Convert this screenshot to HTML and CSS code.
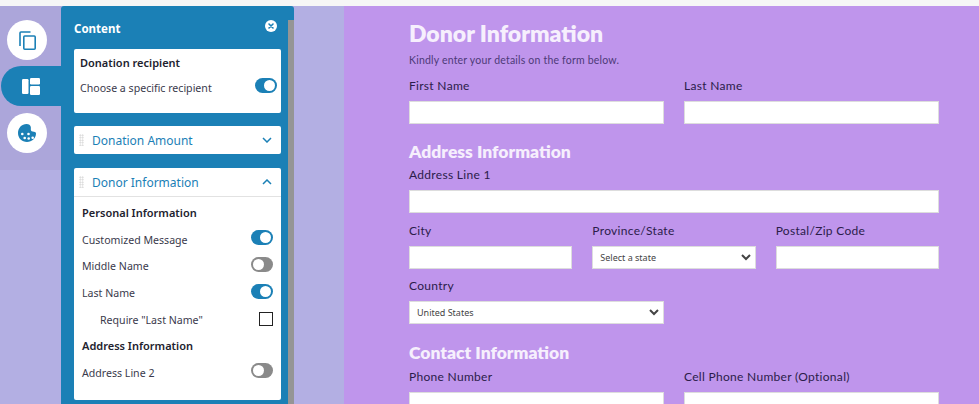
FILE: index.html
```html
<!DOCTYPE html>
<html lang="en">
<head>
<meta charset="UTF-8">
<meta name="viewport" content="width=device-width, initial-scale=1.0">
<title>Donation form editor</title>
<link rel="stylesheet" href="styles.css">
</head>
<body>

<div class="topbar"></div>

<div class="workspace">

    <nav class="rail">
        <div class="rail-tabs">
            <button class="rail-btn" aria-label="Pages">
                <svg width="17" height="19" viewBox="0 0 17 19" fill="none" stroke="#1b80b6" stroke-width="1.600">
                    <path d="M1 15V2a1 1 0 0 1 1-1h9.500"/>
                    <rect x="4.800" y="5" width="11.400" height="13.200" rx="1"/>
                </svg>
            </button>
            <button class="rail-btn rail-btn-active" aria-label="Content">
                <svg width="18" height="17" viewBox="0 0 18 17" fill="#fff">
                    <rect x="0" y="1" width="6.500" height="15" rx="1.200"/>
                    <rect x="8" y="0" width="10" height="6.500" rx="1.200"/>
                    <rect x="8" y="8" width="10" height="9" rx="1.200"/>
                </svg>
            </button>
            <button class="rail-btn rail-btn-last" aria-label="Appearance">
                <svg width="18" height="18" viewBox="0 0 18 18">
                    <path fill="#1b80b6" d="M8.500 0C3.800 0 0 3.900 0 9c0 5.200 4 9 9 9s9-3.900 9-8.500c0-1.200-.9-1.700-2-1.800-2-.1-3.200-.9-3.200-2.300 0-.9.200-1.500 0-2.500C12.400 1.300 10.900 0 8.500 0z"/>
                    <g fill="#fff">
                        <circle cx="4.300" cy="10" r="1.300"/>
                        <circle cx="10.500" cy="10" r="1.300"/>
                        <circle cx="6.700" cy="14" r="1.300"/>
                        <circle cx="10.700" cy="14.500" r="1.300"/>
                        <circle cx="14.700" cy="13.800" r="1.300"/>
                    </g>
                </svg>
            </button>
        </div>
    </nav>

    <aside class="panel">
        <div class="panel-head">
            <h2>Content</h2>
            <span class="close-btn">
                <svg width="12" height="12" viewBox="0 0 12 12">
                    <circle cx="6" cy="6" r="6" fill="#fff"/>
                    <path d="M4 4l4 4M8 4l-4 4" stroke="#1b80b6" stroke-width="1.600" stroke-linecap="round"/>
                </svg>
            </span>
        </div>

        <div class="card recipient">
            <h3>Donation recipient</h3>
            <div class="row">
                <span>Choose a specific recipient</span>
                <span class="toggle on"></span>
            </div>
        </div>

        <div class="card accordion">
            <span class="grip"></span>
            <span class="accordion-title">Donation Amount</span>
            <svg class="chevron" width="10" height="6" viewBox="0 0 10 6" fill="none" stroke="#1b80b6" stroke-width="1.500"><path d="M1 1l4 4 4-4"/></svg>
        </div>

        <div class="card donor">
            <div class="accordion accordion-open">
                <span class="grip"></span>
                <span class="accordion-title">Donor Information</span>
                <svg class="chevron" width="10" height="6" viewBox="0 0 10 6" fill="none" stroke="#1b80b6" stroke-width="1.500"><path d="M1 5l4-4 4 4"/></svg>
            </div>
            <div class="donor-body">
                <h3>Personal Information</h3>
                <div class="row"><span>Customized Message</span><span class="toggle on"></span></div>
                <div class="row"><span>Middle Name</span><span class="toggle"></span></div>
                <div class="row"><span>Last Name</span><span class="toggle on"></span></div>
                <div class="row row-sub"><span>Require "Last Name"</span><span class="checkbox"></span></div>
                <h3>Address Information</h3>
                <div class="row"><span>Address Line 2</span><span class="toggle"></span></div>
            </div>
        </div>
    </aside>

    <div class="gutter"></div>

    <main class="form-area">
        <h1>Donor Information</h1>
        <p class="intro">Kindly enter your details on the form below.</p>

        <div class="cols-2">
            <div class="field"><label>First Name</label><input type="text"></div>
            <div class="field"><label>Last Name</label><input type="text"></div>
        </div>

        <h2 class="section">Address Information</h2>
        <div class="field"><label>Address Line 1</label><input type="text"></div>

        <div class="cols-3">
            <div class="field"><label>City</label><input type="text"></div>
            <div class="field">
                <label>Province/State</label>
                <div class="select">
                    <span>Select a state</span>
                    <svg width="10" height="7" viewBox="0 0 10 7" fill="none" stroke="#444" stroke-width="2"><path d="M1 1l4 4 4-4"/></svg>
                </div>
            </div>
            <div class="field"><label>Postal/Zip Code</label><input type="text"></div>
        </div>

        <div class="cols-2">
            <div class="field">
                <label>Country</label>
                <div class="select">
                    <span>United States</span>
                    <svg width="10" height="7" viewBox="0 0 10 7" fill="none" stroke="#444" stroke-width="2"><path d="M1 1l4 4 4-4"/></svg>
                </div>
            </div>
        </div>

        <h2 class="section section-contact">Contact Information</h2>
        <div class="cols-2">
            <div class="field"><label>Phone Number</label><input type="text"></div>
            <div class="field"><label>Cell Phone Number (Optional)</label><input type="text"></div>
        </div>
    </main>

</div>

</body>
</html>
```

FILE: styles.css
```css
html, body {
    height: 100%;
}
body {
    margin: 0;
    height: 404px;
    overflow: hidden;
    background-color: #b3afe3;
    font-family: "Noto Sans", sans-serif;
    color: #2a2a3a;
}
.topbar {
    height: 6px;
    background-color: #f6f6f6;
}
.workspace {
    display: flex;
    height: 398px;
}

/* left icon rail */
.rail {
    width: 61px;
    flex-shrink: 0;
}
.rail-tabs {
    height: 164px;
    padding-top: 14px;
    box-sizing: border-box;
    background-color: #aca6da;
    display: flex;
    flex-direction: column;
    align-items: flex-end;
    gap: 6px;
}
.rail-btn {
    width: 40px;
    height: 40px;
    margin-right: 14px;
    padding: 0;
    border: none;
    border-radius: 50%;
    background-color: #fff;
    display: flex;
    justify-content: center;
    align-items: center;
}
.rail-btn-active {
    width: 60px;
    margin-right: 0;
    border-radius: 20px 0 0 20px;
    background-color: #1b80b6;
}
.rail-btn-last {
    margin-top: 1px;
}

/* content panel */
.panel {
    width: 233px;
    flex-shrink: 0;
    box-sizing: border-box;
    padding: 0 13px;
    background-color: #1b80b6;
    border-radius: 3px 3px 0 0;
    position: relative;
}
.panel::after {
    content: "";
    position: absolute;
    top: 14px;
    right: 0;
    bottom: 0;
    width: 6px;
    background-color: #959595;
}
.panel-head {
    height: 43px;
    display: flex;
    justify-content: space-between;
    align-items: center;
}
.panel-head h2 {
    margin: 1px 0 0;
    font-size: 11.500px;
    font-weight: 700;
    color: #fff;
}
.close-btn {
    display: flex;
    margin: 0 4px 3px 0;
}
.card {
    background-color: #fff;
    width: 207px;
    border-radius: 2px;
}
.card h3 {
    margin: 0;
    font-size: 11px;
    font-weight: 600;
    color: #22222e;
}
.row {
    display: flex;
    justify-content: space-between;
    align-items: center;
    font-size: 10.600px;
    color: #3a3a4c;
}
.recipient {
    height: 64px;
    box-sizing: border-box;
    padding: 5px 4px 0 6px;
    margin-bottom: 13px;
}
.recipient h3 {
    line-height: 17px;
}
.recipient .row {
    margin-top: 9px;
}
.accordion {
    height: 28px;
    display: flex;
    align-items: center;
    padding: 0 9px 0 5px;
    box-sizing: border-box;
}
.card.accordion {
    margin-bottom: 14px;
}
.accordion-open {
    height: 29px;
    border-bottom: 1px solid #e2e2e2;
}
.grip {
    width: 5px;
    height: 12px;
    margin-right: 8px;
    background-image: radial-gradient(#d4d4d4 0.8px, transparent 0.9px);
    background-size: 2.500px 2.500px;
}
.accordion-title {
    flex: 1;
    font-size: 12px;
    color: #1b80b6;
}
.donor {
    height: 232px;
}
.donor-body {
    padding: 3px 8px 0;
}
.donor-body h3 {
    line-height: 26.600px;
}
.donor-body .row {
    height: 26.600px;
}
.row-sub {
    padding-left: 18px;
}
.toggle {
    width: 22px;
    height: 15px;
    border-radius: 8px;
    background-color: #8a8a8a;
    position: relative;
    margin: -2px 0 2px;
}
.toggle::after {
    content: "";
    position: absolute;
    top: 2px;
    left: 2px;
    width: 11px;
    height: 11px;
    border-radius: 50%;
    background-color: #fff;
}
.toggle.on {
    background-color: #1b80b6;
}
.toggle.on::after {
    left: 9px;
}
.checkbox {
    width: 12px;
    height: 12px;
    border: 1px solid #222;
    margin: -1px 0 1px;
}

.gutter {
    width: 50px;
    flex-shrink: 0;
}

/* form preview */
.form-area {
    flex: 1;
    background-color: #bf95ec;
    padding: 12px 40px 0 65px;
    overflow: hidden;
}
.form-area h1 {
    margin: 0;
    font-family: "Lato", sans-serif;
    font-size: 23px;
    line-height: 30px;
    font-weight: 800;
    color: #f6effd;
}
.intro {
    margin: 4px 0 7px;
    font-size: 10.500px;
    line-height: 16px;
    letter-spacing: 0.2px;
    color: #4d3a78;
    font-family: "Lato", sans-serif;
}
.cols-2 {
    display: grid;
    grid-template-columns: repeat(2, 1fr);
    gap: 20px;
}
.cols-3 {
    display: grid;
    grid-template-columns: repeat(3, 1fr);
    gap: 20px;
    margin-top: 7px;
}
.cols-3 + .cols-2 {
    margin-top: 6px;
}
.field {
    margin-top: 2px;
}
.field label {
    display: block;
    font-family: "Lato", sans-serif;
    font-size: 12px;
    line-height: 17px;
    color: #2b1c4a;
    letter-spacing: 0.3px;
    margin-bottom: 7px;
}
.field input,
.select {
    display: block;
    width: 100%;
    height: 23px;
    box-sizing: border-box;
    border: 1px solid #ddd;
    background-color: #fff;
    margin: 0;
}
.select {
    display: flex;
    justify-content: space-between;
    align-items: center;
    padding: 0 4px 0 7px;
    font-size: 9px;
    color: #444;
}
.section {
    margin: 17px 0 0;
    padding-bottom: 1px;
    font-family: "Lato", sans-serif;
    font-size: 17.500px;
    line-height: 22px;
    font-weight: 800;
    color: #f6effd;
}
.section-contact {
    margin-top: 18px;
    padding-bottom: 2px;
}
```
